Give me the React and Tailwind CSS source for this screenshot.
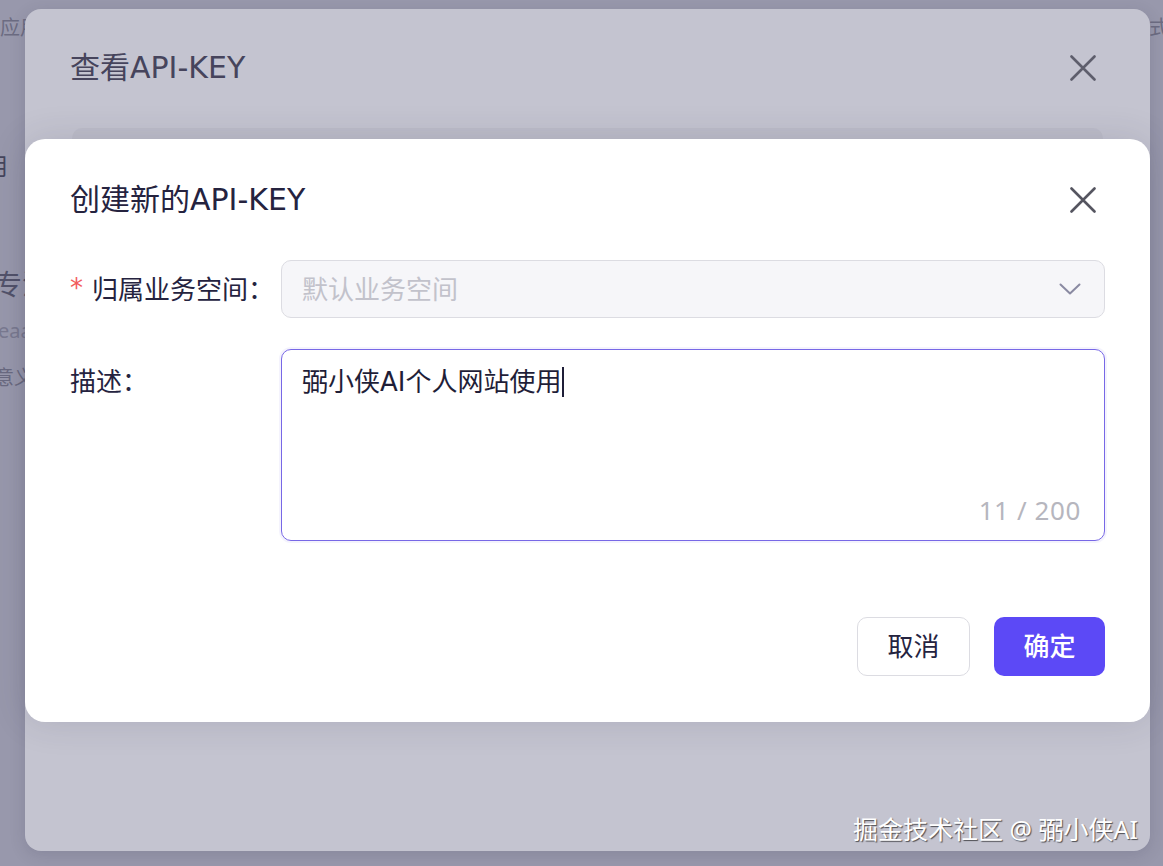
import React from "react";

function XIcon({ color }) {
  return (
    <svg width="26" height="26" viewBox="0 0 26 26" fill="none">
      <path d="M1.5 1.5L24.5 24.5M24.5 1.5L1.5 24.5" stroke={color} strokeWidth="2.6" strokeLinecap="round" />
    </svg>
  );
}

export default function App() {
  const font = { fontFamily: '"Noto Sans", "Noto Sans CJK SC", sans-serif' };
  const wide = { fontFamily: '"DejaVu Sans", "Noto Sans CJK SC", sans-serif' };
  return (
    <div className="relative h-[866px] w-[1163px] overflow-hidden bg-[#9898ac]" style={font}>
      {/* background page (under overlay) */}
      <div className="flex flex-col pt-[16px]">
        <div className="flex justify-between text-[20px] leading-[24px] text-[#6c6c82]">
          <span>应用</span>
          <span className="mr-[-6px]">方式</span>
        </div>
        <div className="mt-[112px] ml-[-40px] text-[24px] leading-[28px] text-[#45455c]">使用</div>
        <div className="mt-[88px] ml-[-6px] text-[28px] leading-[32px] text-[#52526a]">专注</div>
        <div className="mt-[19px] ml-[-2px] text-[20px] leading-[24px] text-[#7a7a90]">eaa</div>
        <div className="mt-[23px] ml-[-6px] text-[20px] leading-[24px] text-[#6a6a80]">意义</div>
      </div>

      {/* outer modal (under overlay) */}
      <div className="absolute left-[25px] top-[9px] h-[842px] w-[1125px] rounded-[16px] bg-[#c4c4d0] shadow-[0_4px_16px_rgba(40,40,70,0.15)]">
        <div className="flex items-center justify-between pl-[45px] pr-[45px] pt-[39px]">
          <div className="text-[30px] leading-[40px] text-[#46445c]" style={wide}>查看API-KEY</div>
          <div className="flex h-[40px] w-[44px] items-center justify-center">
            <XIcon color="#5e5e6c" />
          </div>
        </div>
        <div className="mx-[47px] mt-[40px] h-[60px] rounded-[10px] bg-[#bdbdc9]"></div>
      </div>

      {/* inner modal */}
      <div className="absolute left-[25px] top-[139px] flex h-[583px] w-[1125px] flex-col rounded-[20px] bg-white px-[45px] shadow-[0_0_36px_rgba(40,40,70,0.14)]">
        <div className="flex items-center justify-between pt-[41px]">
          <div className="text-[30px] leading-[40px] text-[#25233f]" style={wide}>创建新的API-KEY</div>
          <div className="flex h-[40px] w-[44px] items-center justify-center">
            <XIcon color="#555560" />
          </div>
        </div>

        <div className="mt-[40px] flex items-center">
          <div className="flex w-[211px] items-center text-[26px] leading-[34px] text-[#25233f]">
            <span className="mr-[9px] mt-[-2px] text-[26px] leading-[34px] text-[#f25c5c]" style={{ fontFamily: '"DejaVu Sans", sans-serif' }}>*</span>
            <span>归属业务空间：</span>
          </div>
          <div className="flex h-[58px] flex-1 items-center justify-between rounded-[10px] border border-[#dcdce2] bg-[#f6f6f9] pl-[20px] pr-[23px]">
            <span className="text-[26px] leading-[34px] text-[#c2c2cb]">默认业务空间</span>
            <svg width="22" height="12" viewBox="0 0 22 12" fill="none">
              <path d="M1.5 1.5L11 10.5L20.5 1.5" stroke="#8a8aa2" strokeWidth="2" strokeLinecap="round" strokeLinejoin="round" />
            </svg>
          </div>
        </div>

        <div className="mt-[31px] flex items-start">
          <div className="w-[211px] pt-[15px] text-[26px] leading-[34px] text-[#25233f]">描述：</div>
          <div className="flex h-[192px] flex-1 flex-col justify-between rounded-[10px] border border-[#7868e6] bg-white pl-[20px] pr-[23px] pt-[15px] pb-[13px] shadow-[0_0_0_2px_rgba(120,104,230,0.08)]">
            <div className="flex items-center text-[26px] leading-[34px] text-[#1f1e38]" style={wide}>
              <span>弼小侠AI个人网站使用</span>
              <span className="ml-[1px] inline-block h-[30px] w-[1.5px] bg-[#1f1e38]"></span>
            </div>
            <div className="text-right text-[26px] leading-[34px] tracking-[0.6px] text-[#b6b6be]">11 / 200</div>
          </div>
        </div>

        <div className="mt-[76px] flex justify-end gap-[24px]">
          <div className="flex h-[59px] w-[113px] items-center justify-center rounded-[10px] border border-[#dcdce2] bg-white text-[26px] text-[#25233f]">
            取消
          </div>
          <div className="flex h-[59px] w-[111px] items-center justify-center rounded-[10px] bg-[#5c49f6] text-[26px] font-medium text-white">
            确定
          </div>
        </div>
      </div>

      {/* watermark */}
      <div className="absolute bottom-[22px] right-[25px] text-[25px] leading-[30px] text-white [text-shadow:1px_1px_1px_rgba(0,0,0,0.6)]">
        掘金技术社区 @ 弼小侠AI
      </div>
    </div>
  );
}
